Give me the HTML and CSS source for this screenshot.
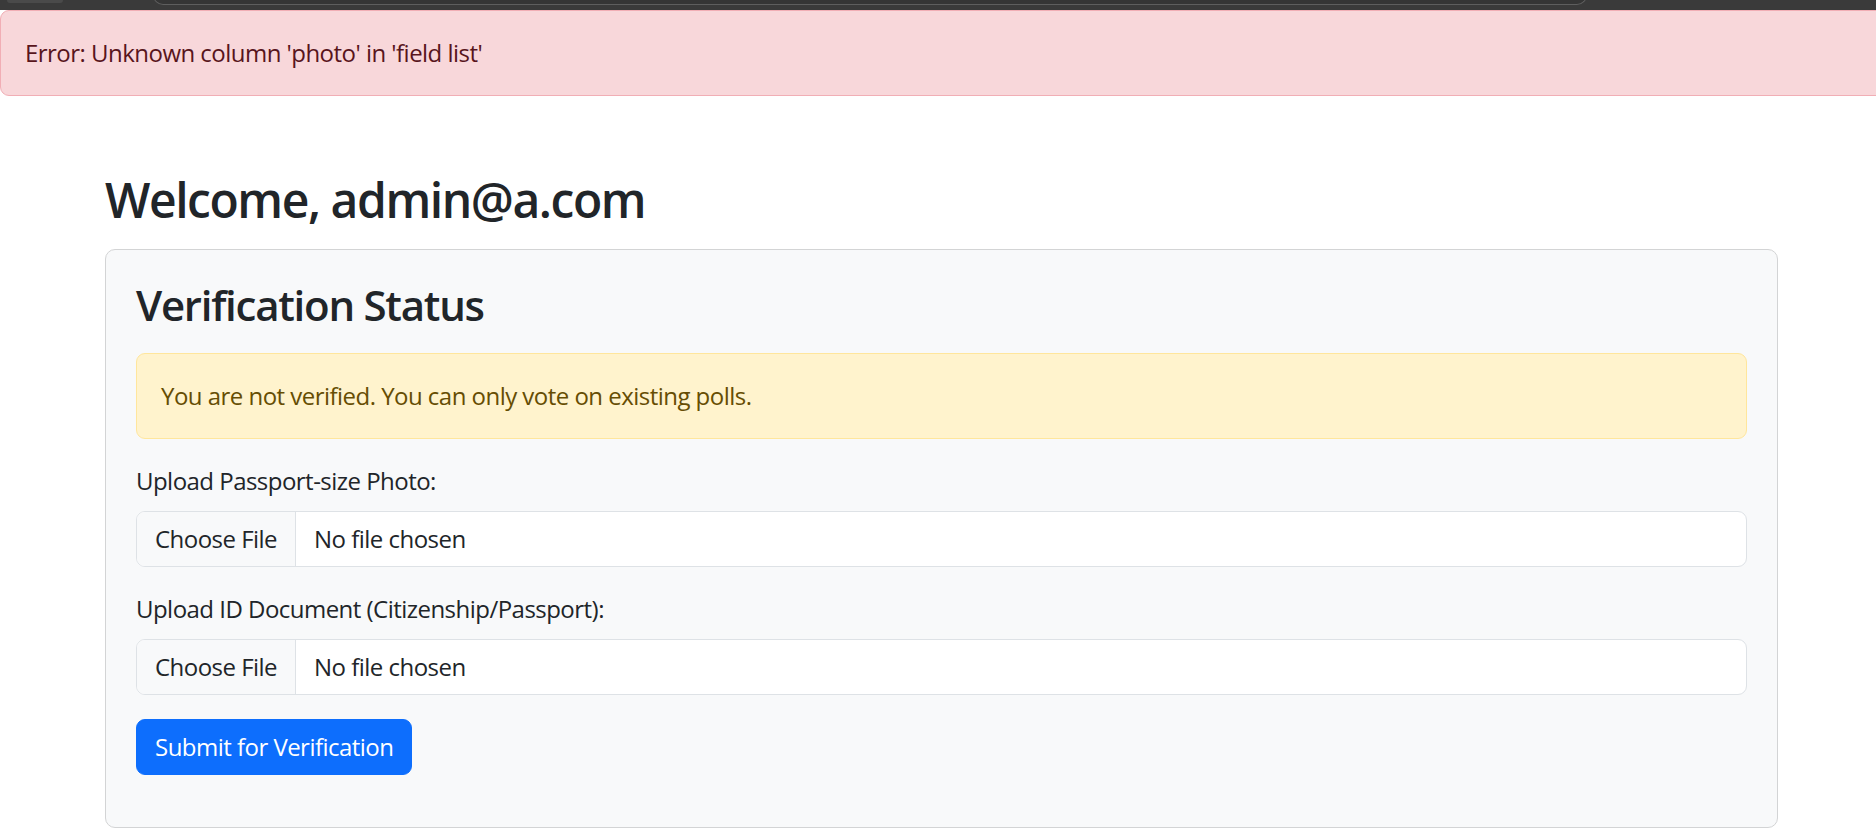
FILE: index.html
```html
<!DOCTYPE html>
<html lang="en">
<head>
<meta charset="utf-8">
<title>Dashboard</title>
<link rel="stylesheet" href="styles.css">
</head>
<body>
<div class="chrome">
  <span class="chrome-tab"></span>
  <span class="chrome-omnibox"></span>
</div>
<div class="alert alert-danger">Error: Unknown column 'photo' in 'field list'</div>
<main class="container">
  <h2 class="welcome">Welcome, admin@a.com</h2>
  <section class="card">
    <h3 class="card-title">Verification Status</h3>
    <div class="alert alert-warning">You are not verified. You can only vote on existing polls.</div>
    <form class="verify-form">
      <div class="field">
        <label class="form-label" for="photo">Upload Passport-size Photo:</label>
        <input class="form-control" type="file" id="photo" name="photo">
      </div>
      <div class="field">
        <label class="form-label" for="doc">Upload ID Document (Citizenship/Passport):</label>
        <input class="form-control" type="file" id="doc" name="doc">
      </div>
      <button class="btn-primary" type="submit">Submit for Verification</button>
    </form>
  </section>
</main>
</body>
</html>
```

FILE: styles.css
```css
html, body {
  margin: 0;
  padding: 0;
  background: #ffffff;
  overflow: hidden;
}

body {
  font-family: "Open Sans", "Noto Sans", "Liberation Sans", sans-serif;
  font-size: 24px;
  line-height: 1.5;
  letter-spacing: -0.022em;
  color: #212529;
}

.chrome {
  height: 10px;
  background: #3a3a3a;
  display: flex;
  align-items: flex-start;
  overflow: hidden;
}

.chrome-tab {
  display: block;
  width: 56px;
  height: 3px;
  margin-left: 7px;
  background: #4a4a4a;
  border-radius: 0 0 3px 3px;
}

.chrome-omnibox {
  display: block;
  width: 1432px;
  height: 14px;
  margin-left: 90px;
  margin-top: -10px;
  border: 1px solid #5e5e5e;
  border-top: none;
  border-radius: 0 0 10px 10px;
  background: #353535;
}

.alert {
  padding: 24px;
  border: 1px solid transparent;
  border-radius: 9px;
  margin: 0;
}

.alert-danger {
  background: #f8d7da;
  border-color: #f1aeb5;
  color: #58151c;
  margin-right: -40px;
}

.alert-warning {
  background: #fff3cd;
  border-color: #ffe69c;
  color: #664d03;
  margin-bottom: 24px;
}

.container {
  width: 1673px;
  margin: 75px 0 0 105px;
}

.welcome {
  font-size: 48px;
  font-weight: 600;
  line-height: 1.2;
  letter-spacing: -0.03em;
  margin: 0 0 20px;
}

.card {
  background: #f8f9fa;
  border: 1px solid #d3d4d5;
  border-radius: 10px;
  padding: 30px 30px 52px;
}

.card-title {
  font-size: 42px;
  font-weight: 600;
  line-height: 1.2;
  letter-spacing: -0.03em;
  margin: 0 0 23px;
}

.verify-form {
  margin: 0;
}

.field {
  margin-bottom: 24px;
}

.form-label {
  display: block;
  margin-bottom: 12px;
}

.form-control {
  display: block;
  width: 100%;
  box-sizing: border-box;
  font: inherit;
  letter-spacing: inherit;
  color: #212529;
  background: #ffffff;
  border: 1px solid #dee2e6;
  border-radius: 9px;
  padding: 9px 18px;
  line-height: 1.5;
  overflow: hidden;
}

.form-control::file-selector-button {
  font: inherit;
  letter-spacing: inherit;
  color: #212529;
  background: #f8f9fa;
  border: 0 solid #dee2e6;
  border-right-width: 1px;
  border-radius: 0;
  padding: 9px 18px;
  margin: -9px 18px -9px -18px;
  line-height: 1.5;
}

.btn-primary {
  font: inherit;
  letter-spacing: inherit;
  line-height: 1.5;
  color: #ffffff;
  background: #0d6efd;
  border: 1px solid #0d6efd;
  border-radius: 9px;
  padding: 9px 18px;
  cursor: pointer;
}
```
